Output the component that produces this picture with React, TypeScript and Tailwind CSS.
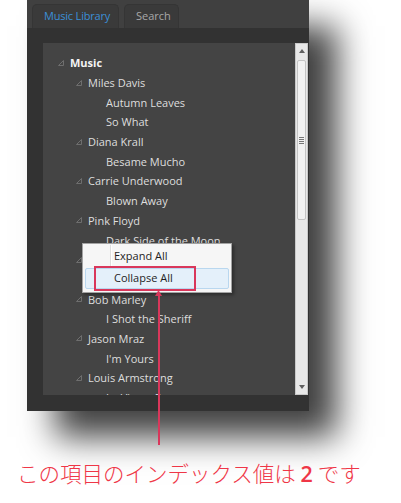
import React from "react";

interface Node {
  text: string;
  level: number;
  expander?: boolean;
  bold?: boolean;
}

const tree: Node[] = [
  { text: "Music", level: 0, expander: true, bold: true },
  { text: "Miles Davis", level: 1, expander: true },
  { text: "Autumn Leaves", level: 2 },
  { text: "So What", level: 2 },
  { text: "Diana Krall", level: 1, expander: true },
  { text: "Besame Mucho", level: 2 },
  { text: "Carrie Underwood", level: 1, expander: true },
  { text: "Blown Away", level: 2 },
  { text: "Pink Floyd", level: 1, expander: true },
  { text: "Dark Side of the Moon", level: 2 },
  { text: "Adele", level: 1, expander: true },
  { text: "Someone Like You", level: 2 },
  { text: "Bob Marley", level: 1, expander: true },
  { text: "I Shot the Sheriff", level: 2 },
  { text: "Jason Mraz", level: 1, expander: true },
  { text: "I'm Yours", level: 2 },
  { text: "Louis Armstrong", level: 1, expander: true },
  { text: "La Vie en Rose", level: 2 },
];

const indent = ["pl-[15px]", "pl-[33px]", "pl-[51px]"];

function Expander() {
  return (
    <svg width="6" height="6" viewBox="0 0 6 6" className="shrink-0">
      <path d="M5.5 0.5 L5.5 5.5 L0.5 5.5 Z" fill="none" stroke="#6e6e6e" strokeWidth="1" />
    </svg>
  );
}

function TreeRow({ node }: { node: Node }) {
  return (
    <div className={`h-[19.7px] flex items-center gap-[6px] ${indent[node.level]}`}>
      {node.expander ? <Expander /> : <span className="w-[6px] shrink-0" />}
      <span
        className={
          node.bold
            ? "text-[11px] font-bold text-[#f4f4f4] leading-none"
            : "text-[11px] text-[#dedede] leading-none"
        }
      >
        {node.text}
      </span>
    </div>
  );
}

function ScrollBar() {
  return (
    <div className="w-[13px] flex flex-col bg-[#e8e8e8] border border-[#c9c9c9]">
      <div className="h-[14px] flex items-center justify-center">
        <svg width="6" height="4" viewBox="0 0 6 4">
          <path d="M0 4 L3 0 L6 4 Z" fill="#606060" />
        </svg>
      </div>
      <div className="flex-1 flex flex-col px-[1px]">
        <div className="mt-[2px] h-[160px] bg-[#f2f2f2] border border-[#c4c4c4] rounded-[2px] flex flex-col items-center justify-center gap-[1px]">
          <div className="w-[5px] h-px bg-[#777]" />
          <div className="w-[5px] h-px bg-[#777]" />
          <div className="w-[5px] h-px bg-[#777]" />
          <div className="w-[5px] h-px bg-[#777]" />
        </div>
      </div>
      <div className="h-[14px] flex items-center justify-center">
        <svg width="6" height="4" viewBox="0 0 6 4">
          <path d="M0 0 L6 0 L3 4 Z" fill="#606060" />
        </svg>
      </div>
    </div>
  );
}

export default function App() {
  return (
    <div className="relative w-[401px] h-[503px] bg-white overflow-hidden font-['Open_Sans',_'Noto_Sans',_sans-serif]">
      {/* Window */}
      <div className="ml-[27px] w-[282px] h-[411px] bg-[#333] flex flex-col shadow-[28px_26px_32px_rgba(0,0,0,0.75)]">
        <div className="h-[28px] shrink-0 bg-[#404040] flex items-end pl-[5px] gap-[5px]">
          <div className="h-[24px] w-[87px] pl-[11px] flex items-center rounded-t-[5px] bg-[#3a3a3a] border border-b-0 border-[#353535]">
            <span className="text-[11px] text-[#3b8fd6] tracking-[-0.2px]">Music Library</span>
          </div>
          <div className="h-[24px] w-[55px] pl-[11px] flex items-center rounded-t-[5px] bg-[#3a3a3a] border border-b-0 border-[#353535]">
            <span className="text-[11px] text-[#a8a8a8]">Search</span>
          </div>
        </div>
        <div className="flex-1 min-h-0 bg-[#323232] pt-[15px] pl-[16px] pr-[1px] pb-[16px] flex">
          <div className="w-[252px] bg-[#444] overflow-hidden pt-[10px]">
            {tree.map((n, i) => (
              <TreeRow key={i} node={n} />
            ))}
          </div>
          <ScrollBar />
        </div>
      </div>

      {/* Context menu */}
      <div className="absolute left-[82px] top-[243px] w-[150px] h-[50px] bg-[#f6f6f6] border border-[#a3a3a3] shadow-[2px_2px_3px_rgba(0,0,0,0.35)]">
        <div className="absolute left-[27px] top-[1px] h-[22px] w-px bg-[#dedede]" />
        <div className="absolute left-[28px] top-[1px] h-[22px] w-px bg-white" />
        <div className="relative h-[24px] pl-[31px] flex items-center text-[11px] text-[#1e1e1e]">
          Expand All
        </div>
        <div className="relative mx-[2px] h-[21px] pl-[28px] flex items-center text-[11px] text-[#1e1e1e] bg-[#e4f0fa] border border-[#b9d7ef] rounded-[2px]">
          Collapse All
        </div>
      </div>

      {/* Annotation */}
      <div className="absolute left-[94px] top-[266px] w-[102px] h-[25px] border-2 border-[#d9375b]" />
      <svg className="absolute left-[154px] top-[290px]" width="9" height="8" viewBox="0 0 9 8">
        <path d="M4.5 0 L8 6 L1 6 Z" fill="#d9375b" />
      </svg>
      <div className="absolute left-[158px] top-[294px] w-[2px] h-[151px] bg-[#d9375b]" />

      <div className="mt-[51px] pl-[17px] text-[21.5px] leading-none text-[#ef3647] font-['Noto_Sans_CJK_JP',_sans-serif] font-light whitespace-nowrap">
        この項目のインデックス値は <span className="font-['Open_Sans',_sans-serif] font-semibold">2</span> です
      </div>
    </div>
  );
}
